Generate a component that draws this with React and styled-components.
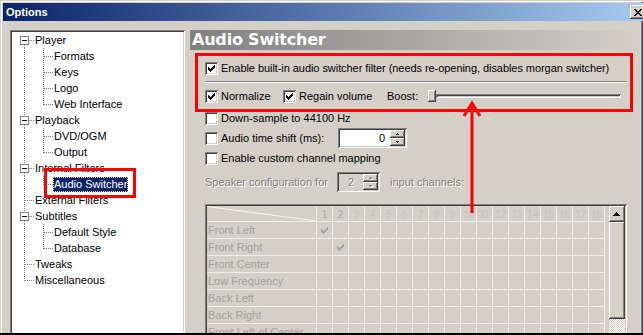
import React from "react";
import styled, { createGlobalStyle, css } from "styled-components";

const FACE = "#D4D0C8";
const LINE = "#EEEDEA";

const GlobalStyle = createGlobalStyle`
  html, body { margin: 0; padding: 0; background: ${FACE}; }
  body { font-family: "Liberation Sans", Arial, sans-serif; font-size: 11px; color: #000; }
  * { box-sizing: border-box; }
`;

const raised = css`
  background: ${FACE};
  box-shadow: inset -1px -1px 0 #404040, inset 1px 1px 0 #fff,
    inset -2px -2px 0 #808080, inset 2px 2px 0 ${FACE};
`;
const sunken = css`
  box-shadow: inset 1px 1px 0 #808080, inset -1px -1px 0 #fff,
    inset 2px 2px 0 #404040, inset -2px -2px 0 ${FACE};
`;

const Window = styled.div`
  position: relative;
  width: 643px;
  height: 335px;
  overflow: hidden;
  background: ${FACE};
  display: flex;
  flex-direction: column;
  padding: 3px 3px 0 3px;
  border-bottom: 2px solid #000;
  box-shadow: inset 1px 1px 0 ${FACE}, inset 2px 2px 0 #fff,
    inset -1px 0 0 #404040, inset -2px 0 0 #808080;
`;

const TitleBar = styled.div`
  height: 18px;
  flex-shrink: 0;
  margin-right: -3px;
  display: flex;
  align-items: center;
  justify-content: space-between;
  padding-left: 3px;
  overflow: hidden;
  background: linear-gradient(to right, #0a246a, #a6caf0);
`;

const Title = styled.span`
  color: #fff;
  font-weight: bold;
  font-size: 11px;
`;

const CloseBtn = styled.div`
  width: 16px;
  height: 14px;
  margin-right: -3px;
  flex-shrink: 0;
  ${raised};
  display: flex;
  align-items: center;
  justify-content: center;
`;

const Body = styled.div`
  flex: 1;
  min-height: 0;
  display: flex;
  gap: 5px;
  padding: 9px 0 0 7px;
  overflow: hidden;
`;

const Tree = styled.div`
  width: 175px;
  flex-shrink: 0;
  margin-bottom: -6px;
  background: #fff;
  ${sunken};
  padding: 2px 2px 0 5px;
  display: flex;
  flex-direction: column;
`;

const TreeRow = styled.div`
  display: flex;
  height: 16px;
  flex-shrink: 0;
`;

const TreeLabel = styled.div`
  margin-top: 1px;
  height: 15px;
  line-height: 13px;
  border: 1px dotted transparent;
  white-space: nowrap;
  ${(p) =>
    p.$selected &&
    css`
      background: #0a246a;
      color: #fff;
      border-color: #e8dc8c;
    `}
`;

const Panel = styled.div`
  flex: 1;
  min-width: 0;
  display: flex;
  flex-direction: column;
`;

const Banner = styled.div`
  height: 20px;
  flex-shrink: 0;
  display: flex;
  align-items: center;
  padding-left: 2px;
  background: linear-gradient(to right, #808080, ${FACE});
  color: #fff;
  font-family: "DejaVu Sans", Verdana, sans-serif;
  font-weight: bold;
  font-size: 16px;
  letter-spacing: -0.2px;
  line-height: 1;
`;

const Content = styled.div`
  display: flex;
  flex-direction: column;
  padding: 8px 13px 0 15px;
`;

const Row = styled.div`
  display: flex;
  align-items: center;
  height: 20px;
  flex-shrink: 0;
  margin-top: ${(p) => p.$mt || 0}px;
  white-space: nowrap;
`;

const Item = styled.div`
  display: flex;
  align-items: center;
  gap: 3px;
  flex-shrink: 0;
  width: ${(p) => (p.$w ? `${p.$w}px` : "auto")};
`;

const Text = styled.span`
  ${(p) =>
    p.$disabled &&
    css`
      color: #808080;
      text-shadow: 1px 1px 0 #fff;
    `}
  margin-left: ${(p) => p.$ml || 0}px;
  letter-spacing: ${(p) => p.$ls || 0}px;
`;

const Separator = styled.div`
  height: 2px;
  margin: 3px 0;
  border-top: 1px solid #808080;
  border-bottom: 1px solid #fff;
  flex-shrink: 0;
`;

const CheckBox = styled.span`
  width: 13px;
  height: 13px;
  flex-shrink: 0;
  background: #fff;
  ${sunken};
  display: flex;
  align-items: center;
  justify-content: center;
`;

const EditBox = styled.div`
  width: ${(p) => p.$w}px;
  height: 20px;
  flex-shrink: 0;
  ${sunken};
  background: ${(p) => (p.$disabled ? FACE : "#fff")};
  padding: 2px;
  display: flex;
`;

const EditValue = styled.div`
  flex: 1;
  display: flex;
  align-items: center;
  justify-content: ${(p) => (p.$center ? "center" : "flex-end")};
  padding-right: ${(p) => (p.$center ? 0 : 5)}px;
  ${(p) =>
    p.$disabled &&
    css`
      color: #808080;
      text-shadow: 1px 1px 0 #fff;
    `}
`;

const SpinCol = styled.div`
  width: 15px;
  display: flex;
  flex-direction: column;
`;

const SpinBtn = styled.div`
  flex: 1;
  ${raised};
  display: flex;
  align-items: center;
  justify-content: center;
`;

const Slider = styled.div`
  flex: 1;
  display: flex;
  align-items: center;
  height: 20px;
  margin-right: 6px;
`;

const Thumb = styled.div`
  width: 8px;
  height: 12px;
  flex-shrink: 0;
  ${raised};
`;

const Groove = styled.div`
  flex: 1;
  height: 4px;
  ${sunken};
`;

const GridBox = styled.div`
  margin-top: 12px;
  height: 160px;
  flex-shrink: 0;
  ${sunken};
  padding: 2px;
  display: flex;
  gap: 4px;
`;

const Table = styled.div`
  flex: 1;
  display: grid;
  grid-template-columns: 110px repeat(18, 16px);
  grid-template-rows: 16px;
  grid-auto-rows: 17px;
  align-content: start;
`;

const Cell = styled.div`
  position: relative;
  border-right: 1px solid ${LINE};
  border-bottom: 1px solid ${LINE};
  display: flex;
  align-items: center;
  justify-content: ${(p) => (p.$label ? "flex-start" : "center")};
  padding-left: ${(p) => (p.$label ? 1 : 0)}px;
  white-space: nowrap;
  overflow: hidden;
  letter-spacing: ${(p) => (p.$tight ? -0.5 : 0)}px;
  color: ${(p) => p.$color || "#a0a0a0"};
`;

const Scrollbar = styled.div`
  width: 16px;
  flex-shrink: 0;
  display: flex;
  flex-direction: column;
`;

const ScrollBtn = styled.div`
  height: 16px;
  flex-shrink: 0;
  ${raised};
  display: flex;
  align-items: center;
  justify-content: center;
`;

const ScrollThumb = styled.div`
  height: 97px;
  flex-shrink: 0;
  ${raised};
`;

const ScrollTrack = styled.div`
  flex: 1;
  background: repeating-conic-gradient(#fff 0 25%, ${FACE} 0 50%) 0 0 / 2px 2px;
`;

const RedBox = styled.div`
  position: absolute;
  border: 3px solid #ff0000;
  pointer-events: none;
  left: ${(p) => p.$x}px;
  top: ${(p) => p.$y}px;
  width: ${(p) => p.$w}px;
  height: ${(p) => p.$h}px;
`;

const ArrowSvg = styled.svg`
  position: absolute;
  left: 460px;
  top: 100px;
  pointer-events: none;
`;

/* ---------- small drawings ---------- */

const CheckMark = ({ color = "#000" }) => (
  <svg width="7" height="7" viewBox="0 0 7 7" shapeRendering="crispEdges">
    <rect x="6" y="0" width="1" height="3" fill={color} />
    <rect x="5" y="1" width="1" height="3" fill={color} />
    <rect x="4" y="2" width="1" height="3" fill={color} />
    <rect x="3" y="3" width="1" height="3" fill={color} />
    <rect x="2" y="4" width="1" height="3" fill={color} />
    <rect x="1" y="3" width="1" height="3" fill={color} />
    <rect x="0" y="2" width="1" height="3" fill={color} />
  </svg>
);

const Tri = ({ up = true, size = 3, color = "#000", shadow }) => {
  const w = size * 2 - 1;
  const rows = [];
  for (let i = 0; i < size; i++) {
    const rw = 1 + i * 2;
    const y = up ? i : size - 1 - i;
    rows.push(<rect key={i} x={(w - rw) / 2} y={y} width={rw} height="1" fill={color} />);
  }
  const sh = shadow
    ? rows.map((r, i) => React.cloneElement(r, { key: `s${i}`, fill: shadow, x: r.props.x + 1, y: r.props.y + 1 }))
    : null;
  return (
    <svg width={w + 1} height={size + 1} shapeRendering="crispEdges">
      {sh}
      {rows}
    </svg>
  );
};

const Check = ({ checked }) => (
  <CheckBox>{checked && <CheckMark />}</CheckBox>
);

const SpinEdit = ({ w, value, disabled, center }) => (
  <EditBox $w={w} $disabled={disabled}>
    <EditValue $center={center} $disabled={disabled}>{value}</EditValue>
    <SpinCol>
      <SpinBtn>
        <Tri size={2} color={disabled ? "#808080" : "#000"} shadow={disabled ? "#fff" : null} />
      </SpinBtn>
      <SpinBtn>
        <Tri up={false} size={2} color={disabled ? "#808080" : "#000"} shadow={disabled ? "#fff" : null} />
      </SpinBtn>
    </SpinCol>
  </EditBox>
);

const DOT = { stroke: "#808080", strokeWidth: 1, strokeDasharray: "1 1" };

const LineCell = ({ kind }) => {
  const v = (y1, y2) => <line x1="9.5" y1={y1} x2="9.5" y2={y2} {...DOT} />;
  const h = (x1) => <line x1={x1} y1="8.5" x2="19" y2="8.5" {...DOT} />;
  const box = (
    <>
      <rect x="5.5" y="4.5" width="8" height="8" fill="#fff" stroke="#808080" />
      <line x1="7" y1="8.5" x2="12" y2="8.5" stroke="#000" />
    </>
  );
  return (
    <svg width="19" height="16" shapeRendering="crispEdges" style={{ flexShrink: 0 }}>
      {kind === "pipe" && v(0, 16)}
      {kind === "tee" && (<>{v(0, 16)}{h(10)}</>)}
      {kind === "elbow" && (<>{v(0, 9)}{h(10)}</>)}
      {kind === "boxFirst" && (<>{v(13, 16)}{h(14)}{box}</>)}
      {kind === "boxMid" && (<>{v(0, 4)}{v(13, 16)}{h(14)}{box}</>)}
    </svg>
  );
};

/* ---------- data ---------- */

const TREE = [
  ["Player", ["boxFirst"]],
  ["Formats", ["pipe", "tee"]],
  ["Keys", ["pipe", "tee"]],
  ["Logo", ["pipe", "tee"]],
  ["Web Interface", ["pipe", "elbow"]],
  ["Playback", ["boxMid"]],
  ["DVD/OGM", ["pipe", "tee"]],
  ["Output", ["pipe", "elbow"]],
  ["Internal Filters", ["boxMid"]],
  ["Audio Switcher", ["pipe", "elbow"], true],
  ["External Filters", ["tee"]],
  ["Subtitles", ["boxMid"]],
  ["Default Style", ["pipe", "tee"]],
  ["Database", ["pipe", "elbow"]],
  ["Tweaks", ["tee"]],
  ["Miscellaneous", ["elbow"]],
];

const CHANNELS = [
  "Front Left",
  "Front Right",
  "Front Center",
  "Low Frequency",
  "Back Left",
  "Back Right",
  "Front Left of Center",
  "Front Right of Center",
];

const MAPPING = { 0: 1, 1: 2 };

const COLS = Array.from({ length: 18 }, (_, i) => i + 1);

export default function App() {
  return (
    <>
      <GlobalStyle />
      <Window>
        <TitleBar>
          <Title>Options</Title>
          <CloseBtn>
            <svg width="8" height="7" shapeRendering="crispEdges">
              <path d="M0 0h2v1h-2zM6 0h2v1h-2zM1 1h2v1h-2zM5 1h2v1h-2zM2 2h4v1h-4zM3 3h2v1h-2zM2 4h4v1h-4zM1 5h2v1h-2zM5 5h2v1h-2zM0 6h2v1h-2zM6 6h2v1h-2z" fill="#000" />
            </svg>
          </CloseBtn>
        </TitleBar>
        <Body>
          <Tree>
            {TREE.map(([label, cells, sel]) => (
              <TreeRow key={label}>
                {cells.map((k, i) => (
                  <LineCell key={i} kind={k} />
                ))}
                <TreeLabel $selected={sel}>{label}</TreeLabel>
              </TreeRow>
            ))}
          </Tree>
          <Panel>
            <Banner>Audio Switcher</Banner>
            <Content>
              <Row>
                <Item>
                  <Check checked />
                  <Text $ls={-0.06}>Enable built-in audio switcher filter (needs re-opening, disables morgan switcher)</Text>
                </Item>
              </Row>
              <Separator />
              <Row>
                <Item $w={78}>
                  <Check checked />
                  <Text>Normalize</Text>
                </Item>
                <Item $w={104}>
                  <Check checked />
                  <Text>Regain volume</Text>
                </Item>
                <Item $w={41}>
                  <Text>Boost:</Text>
                </Item>
                <Slider>
                  <Thumb />
                  <Groove />
                </Slider>
              </Row>
              <Row $mt={2}>
                <Item>
                  <Check />
                  <Text>Down-sample to 44100 Hz</Text>
                </Item>
              </Row>
              <Row>
                <Item $w={133}>
                  <Check />
                  <Text>Audio time shift (ms):</Text>
                </Item>
                <SpinEdit w={69} value="0" />
              </Row>
              <Row>
                <Item>
                  <Check />
                  <Text>Enable custom channel mapping</Text>
                </Item>
              </Row>
              <Row $mt={4}>
                <Item $w={132}>
                  <Text $disabled>Speaker configuration for</Text>
                </Item>
                <SpinEdit w={43} value="2" disabled center />
                <Text $disabled $ml={10}>input channels:</Text>
              </Row>
              <GridBox>
                <Table>
                  <Cell>
                    <svg width="110" height="16" style={{ position: "absolute", left: 0, top: 0 }}>
                      <line x1="0" y1="0.5" x2="110" y2="15" stroke="#f4f4f2" strokeWidth="1" />
                    </svg>
                  </Cell>
                  {COLS.map((c) => (
                    <Cell key={c} $tight={c >= 10} $color={c <= 2 ? "#a8a8a8" : "#c4c4c4"}>{c}</Cell>
                  ))}
                  {CHANNELS.map((ch, r) => (
                    <React.Fragment key={ch}>
                      <Cell $label>{ch}</Cell>
                      {COLS.map((c) => (
                        <Cell key={c}>{MAPPING[r] === c && <CheckMark color="#a4a4a4" />}</Cell>
                      ))}
                    </React.Fragment>
                  ))}
                </Table>
                <Scrollbar>
                  <ScrollBtn>
                    <Tri size={4} />
                  </ScrollBtn>
                  <ScrollThumb />
                  <ScrollTrack />
                </Scrollbar>
              </GridBox>
            </Content>
          </Panel>
        </Body>
        <RedBox $x={44} $y={168} $w={92} $h={30} />
        <RedBox $x={195} $y={53} $w={438} $h={59} />
        <ArrowSvg width="24" height="116">
          <line x1="12" y1="4" x2="12" y2="113" stroke="#ff0000" strokeWidth="3" />
          <polyline points="4,16 12,3 20,16" fill="none" stroke="#ff0000" strokeWidth="3" />
        </ArrowSvg>
      </Window>
    </>
  );
}
